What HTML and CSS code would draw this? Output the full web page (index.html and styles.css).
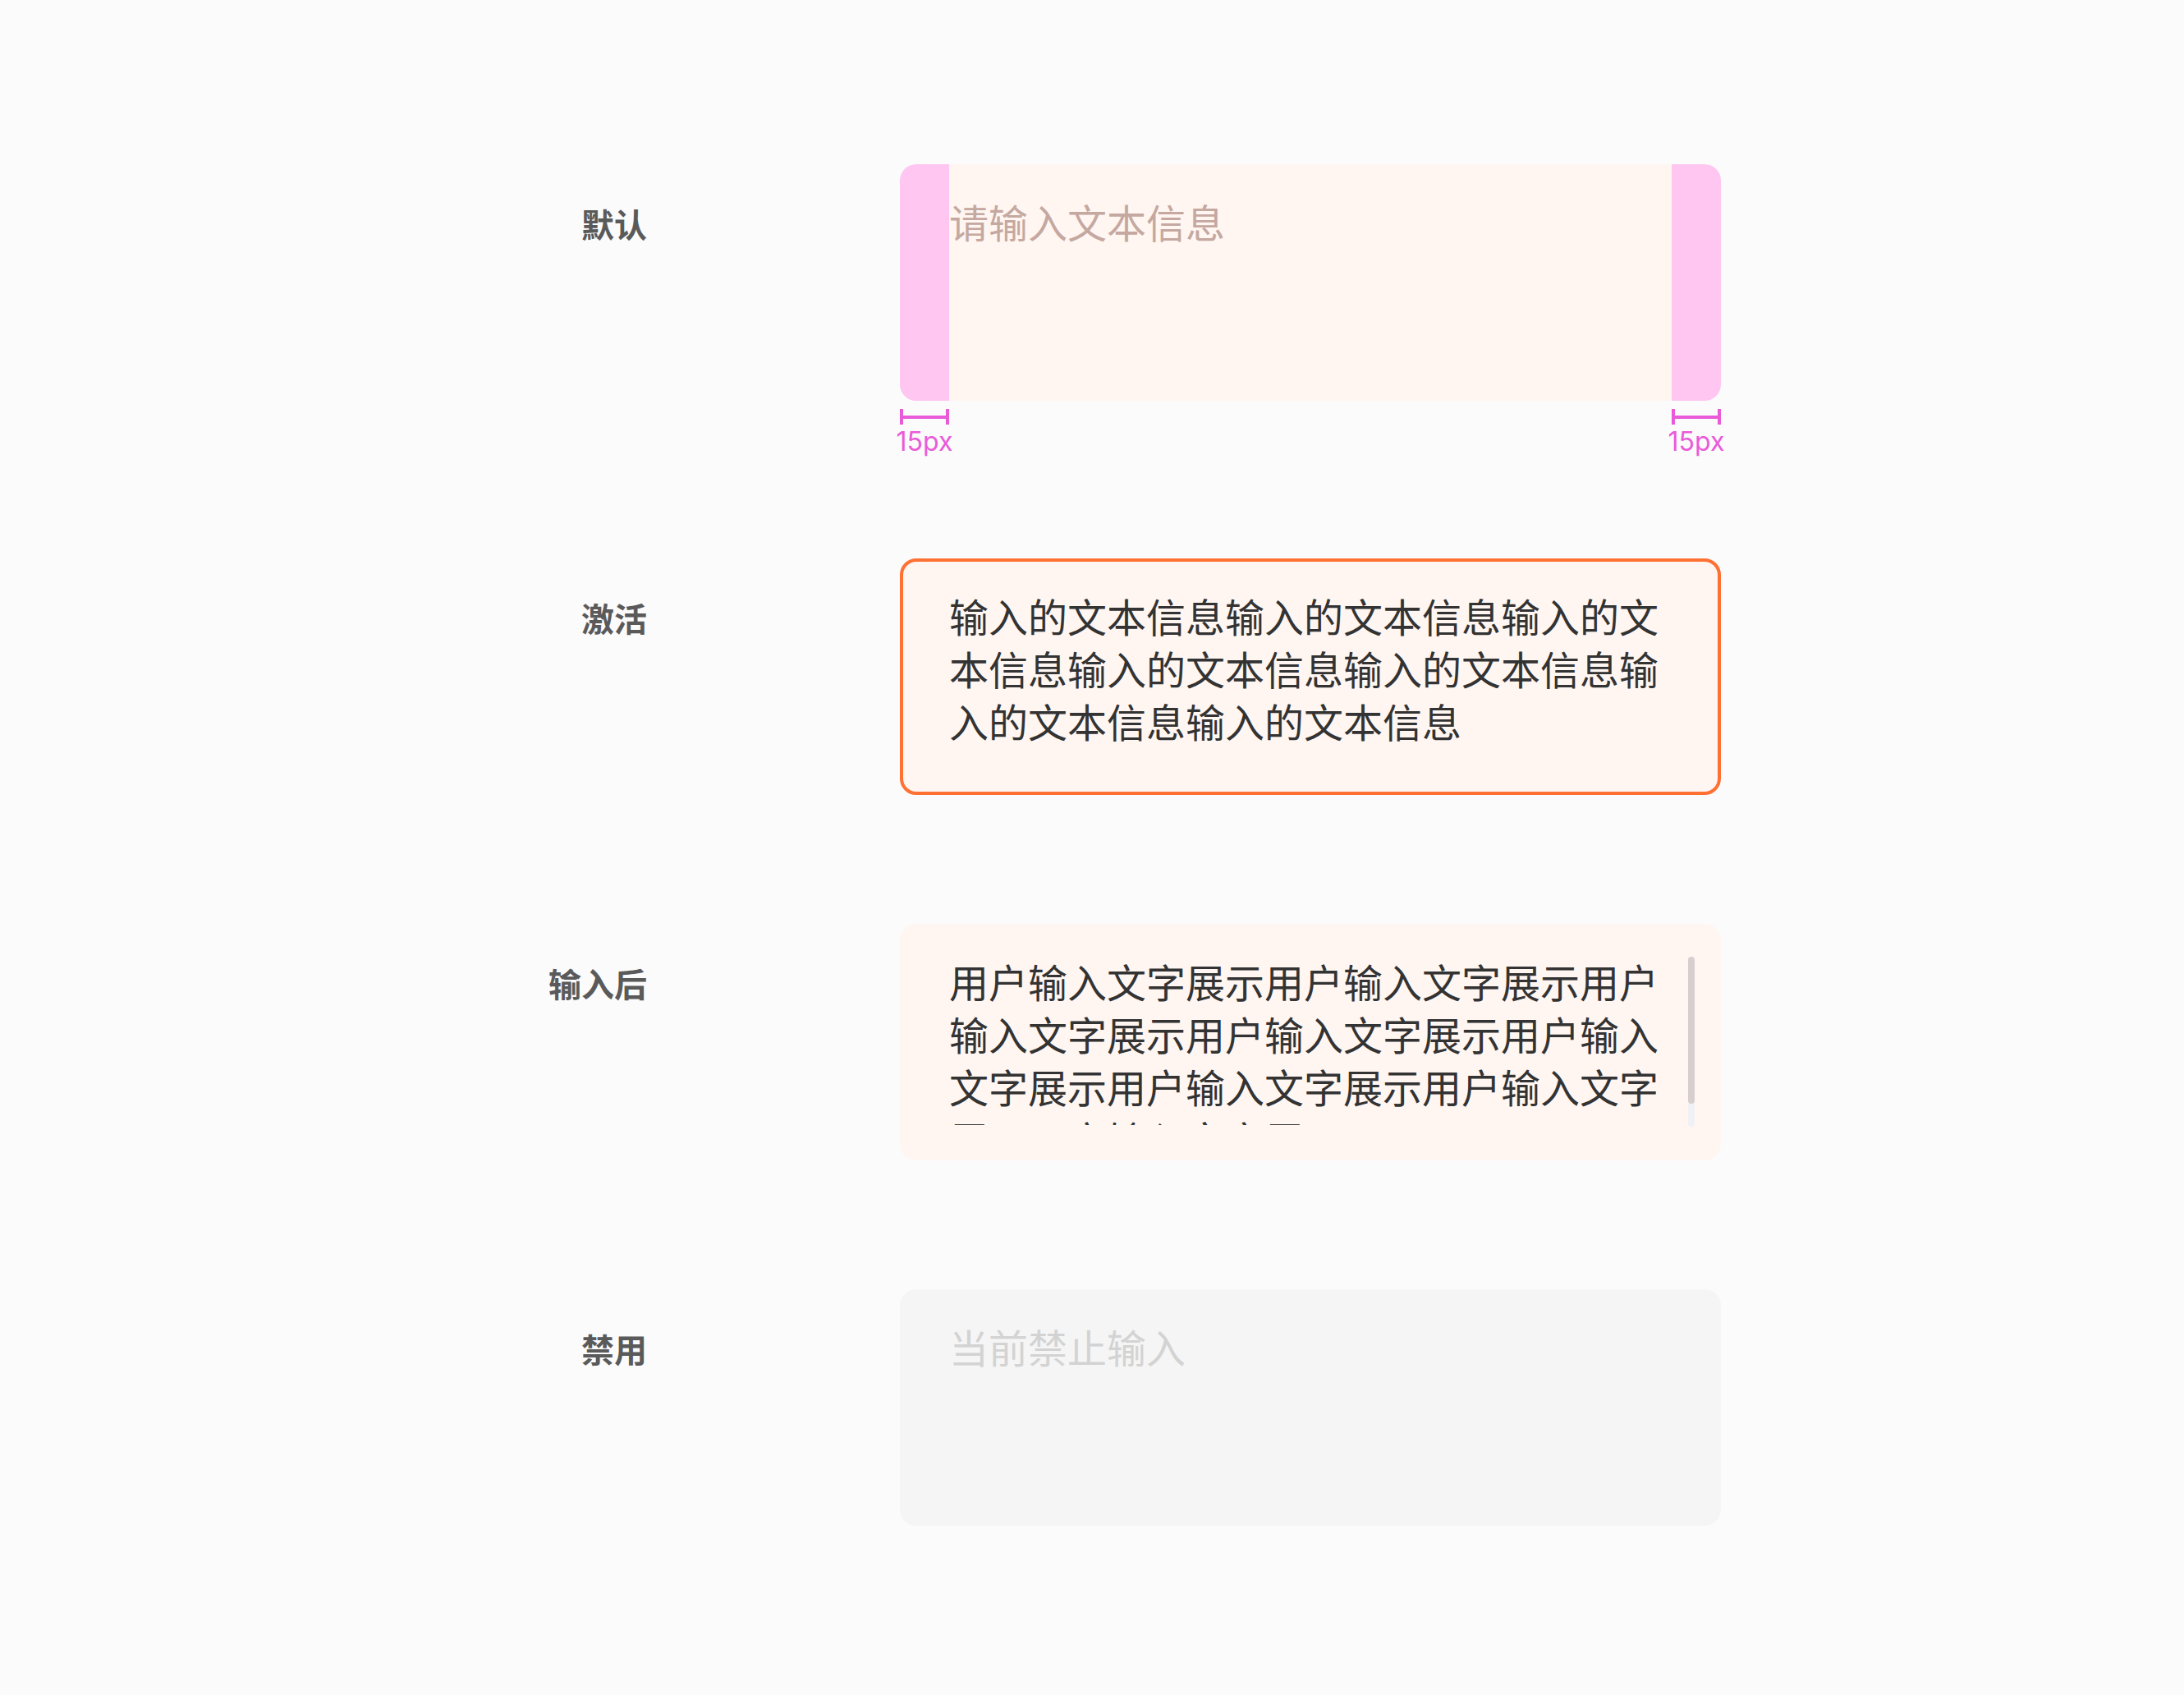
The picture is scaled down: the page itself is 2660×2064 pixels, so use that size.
FILE: index.html
```html
<!DOCTYPE html>
<html lang="zh-CN">
<head>
  <meta charset="UTF-8" />
  <title>多行输入框 状态</title>
  <link rel="stylesheet" href="styles.css">
</head>
<body>
  <main class="states">

    <section class="state state--spec">
      <div class="state-label">默认</div>
      <div class="state-body">
        <div class="field field--default">
          <span class="pad"></span>
          <span class="field-text placeholder">请输入文本信息</span>
          <span class="pad"></span>
        </div>
        <div class="measures">
          <div class="measure"><i class="measure-bar"></i><span>15px</span></div>
          <div class="measure"><i class="measure-bar"></i><span>15px</span></div>
        </div>
      </div>
    </section>

    <section class="state">
      <div class="state-label">激活</div>
      <div class="state-body">
        <div class="field field--active">
          <div class="field-text">输入的文本信息输入的文本信息输入的文本信息输入的文本信息输入的文本信息输入的文本信息输入的文本信息</div>
        </div>
      </div>
    </section>

    <section class="state">
      <div class="state-label">输入后</div>
      <div class="state-body">
        <div class="field field--filled">
          <div class="field-scroll">用户输入文字展示用户输入文字展示用户输入文字展示用户输入文字展示用户输入文字展示用户输入文字展示用户输入文字展示用户输入文字展示</div>
          <div class="scrollbar"><div class="scrollbar-thumb"></div></div>
        </div>
      </div>
    </section>

    <section class="state">
      <div class="state-label">禁用</div>
      <div class="state-body">
        <div class="field field--disabled">
          <div class="field-text placeholder">当前禁止输入</div>
        </div>
      </div>
    </section>

  </main>
</body>
</html>
```

FILE: styles.css
```css
body {
  margin: 0;
  background: #fbfbfb;
  font-family: "Noto Sans CJK SC", "Noto Sans", sans-serif;
}

.states {
  padding: 200px 0 160px;
  display: flex;
  flex-direction: column;
  gap: 157px;
}

.state {
  display: flex;
  align-items: flex-start;
}

/* the measure row hangs under the box and only adds a little to the row */
.state--spec {
  margin-bottom: -33px;
}

.state-label {
  width: 788px;
  margin-right: 308px;
  padding-top: 40px;
  text-align: right;
  font-size: 40px;
  line-height: 64px;
  font-weight: 700;
  color: #5a5a5a;
}

.state-body {
  width: 1000px;
}

.field {
  box-sizing: border-box;
  height: 288px;
  border-radius: 20px;
  background: #fff6f2;
  padding: 37px 60px;
  font-size: 48px;
  line-height: 64px;
  color: #333333;
}

.placeholder {
  color: #c5a8a0;
}

/* 默认：左右内边距标注 */
.field--default {
  display: flex;
  padding: 0;
  overflow: hidden;
}

.field--default .pad {
  width: 60px;
  flex: none;
  background: #fec6f1;
}

.field--default .field-text {
  flex: 1;
  padding-top: 37px;
}

.measures {
  display: flex;
  justify-content: space-between;
  margin-top: 10px;
}

.measure {
  width: 60px;
  display: flex;
  flex-direction: column;
  align-items: center;
  color: #e95bd9;
  font-family: Inter, "Noto Sans", sans-serif;
  font-size: 32px;
  line-height: 36px;
}

.measure-bar {
  display: block;
  box-sizing: border-box;
  width: 60px;
  height: 19px;
  border-left: 4px solid #e85ad8;
  border-right: 4px solid #e85ad8;
  background: linear-gradient(#e85ad8, #e85ad8) center / 100% 4px no-repeat;
  margin-bottom: 3px;
}

/* 激活 */
.field--active {
  border: 4px solid #ff7033;
  padding: 33px 56px;
}

/* 输入后：内容溢出，右侧滚动条 */
.field--filled {
  display: flex;
  align-items: flex-start;
  padding: 40px 32px 40px 60px;
}

.field-scroll {
  flex: 1;
  height: 208px;
  margin-top: -3px;
  margin-right: 8px;
  overflow: hidden;
}

.scrollbar {
  flex: none;
  width: 8px;
  height: 207px;
  border-radius: 4px;
  background: #f0f1f4;
}

.scrollbar-thumb {
  height: 179px;
  border-radius: 4px;
  background: #d7cfcf;
}

/* 禁用 */
.field--disabled {
  background: #f5f5f5;
}

.field--disabled .placeholder {
  color: #d3d3d3;
}
```
